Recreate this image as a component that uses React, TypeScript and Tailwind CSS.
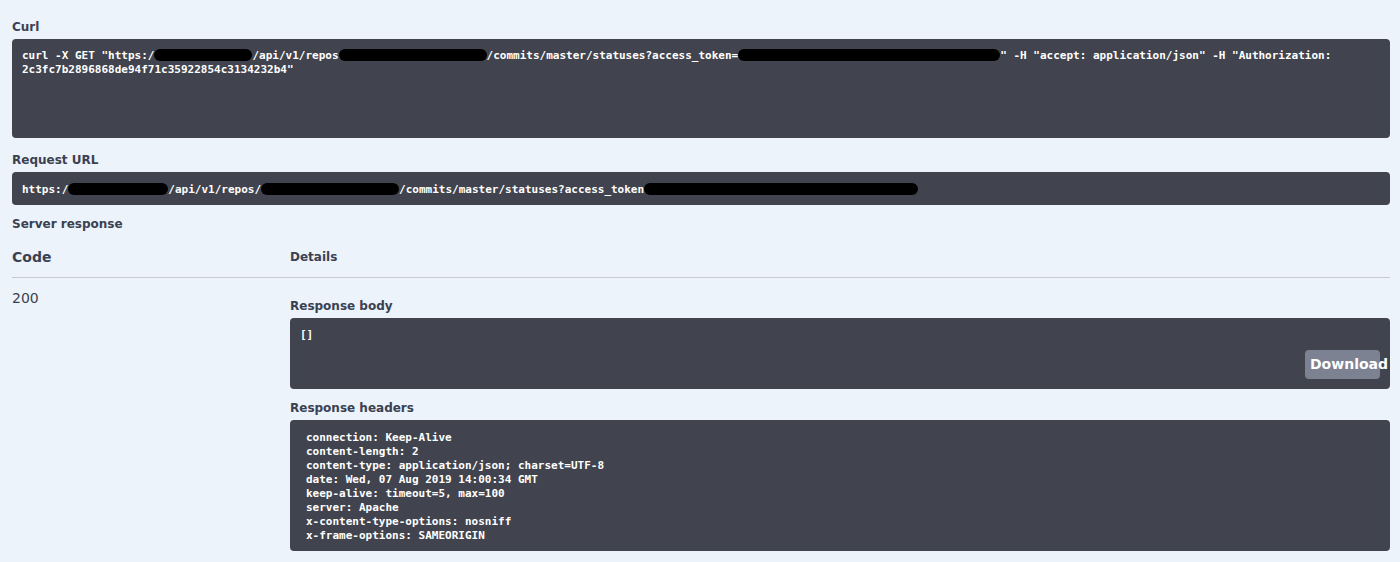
import React from "react";

const mono = "font-['DejaVu_Sans_Mono',monospace]";
const sans = "font-['DejaVu_Sans',sans-serif]";

function Blob({ w }: { w: number }) {
  return (
    <span
      className="inline-block h-[12px] bg-black rounded-full align-middle -mt-[2px]"
      style={{ width: w }}
    />
  );
}

function Label({ children, className = "" }: { children: React.ReactNode; className?: string }) {
  return (
    <div className={`${sans} text-[12px] font-bold leading-[16px] text-[#3b4151] ${className}`}>{children}</div>
  );
}

const headers = [
  "connection: Keep-Alive",
  "content-length: 2",
  "content-type: application/json; charset=UTF-8",
  "date: Wed, 07 Aug 2019 14:00:34 GMT",
  "keep-alive: timeout=5, max=100",
  "server: Apache",
  "x-content-type-options: nosniff",
  "x-frame-options: SAMEORIGIN",
];

export default function App() {
  return (
    <div className="w-[1400px] h-[562px] bg-[#ecf3fb] overflow-hidden">
      <div className="pl-[12px] pr-[10px] pt-[18px]">
        <Label className="pt-[1px] mb-[4px]">Curl</Label>
        <div className={`${mono} h-[99px] bg-[#41444e] rounded-[4px] pl-[10px] pt-[10px] text-[11px] leading-[14px] font-bold text-white whitespace-pre`}>
          <div>
            {'curl -X GET "https:/'}
            <Blob w={98} />
            {"/api/v1/repos"}
            <Blob w={148} />
            {"/commits/master/statuses?access_token="}
            <Blob w={262} />
            {'" -H "accept: application/json" -H "Authorization:'}
          </div>
          <div>{'2c3fc7b2896868de94f71c35922854c3134232b4"'}</div>
        </div>

        <Label className="mt-[13px] pt-[1px] mb-[4px]">Request URL</Label>
        <div className={`${mono} h-[33px] bg-[#41444e] rounded-[4px] pl-[10px] pt-[2px] flex items-center text-[11px] leading-[14px] font-bold text-white whitespace-pre`}>
          <div>
            {"https:/"}
            <Blob w={100} />
            {"/api/v1/repos/"}
            <Blob w={138} />
            {"/commits/master/statuses?access_token"}
            <Blob w={274} />
          </div>
        </div>

        <Label className="mt-[10px] pt-[1px] -mb-[1px]">Server response</Label>

        <div className="flex border-b border-[#c6cbd3] pt-[18px] pb-[12px]">
          <div className={`${sans} w-[278px] text-[14px] font-bold leading-[16px] text-[#3b4151]`}>Code</div>
          <div className={`${sans} text-[12px] font-bold leading-[16px] text-[#3b4151]`}>Details</div>
        </div>

        <div className="flex">
          <div className={`${sans} w-[278px] pt-[12px] text-[14px] leading-[16px] text-[#3b4151]`}>200</div>
          <div className="flex-1 pt-[19px]">
            <Label className="pt-[1px] mb-[4px]">Response body</Label>
            <div className="bg-[#41444e] rounded-[4px] pt-[10px] pb-[10px] pl-[10px] pr-[10px] flex flex-col">
              <div className={`${mono} text-[11px] leading-[14px] font-bold text-white`}>[]</div>
              <div className="self-end mt-[8px] w-[75px] h-[29px] bg-[#7d8293] rounded-[4px] pl-[5px] flex items-center">
                <span className={`${sans} text-[14px] font-bold text-white whitespace-nowrap`}>Download</span>
              </div>
            </div>

            <Label className="mt-[10px] pt-[1px] mb-[4px]">Response headers</Label>
            <div className={`${mono} bg-[#41444e] rounded-[4px] pl-[16px] pt-[11px] pb-[8px] text-[11px] leading-[14px] font-bold text-white whitespace-pre`}>
              {headers.map((h) => (
                <div key={h}>{h}</div>
              ))}
            </div>
          </div>
        </div>
      </div>
    </div>
  );
}
